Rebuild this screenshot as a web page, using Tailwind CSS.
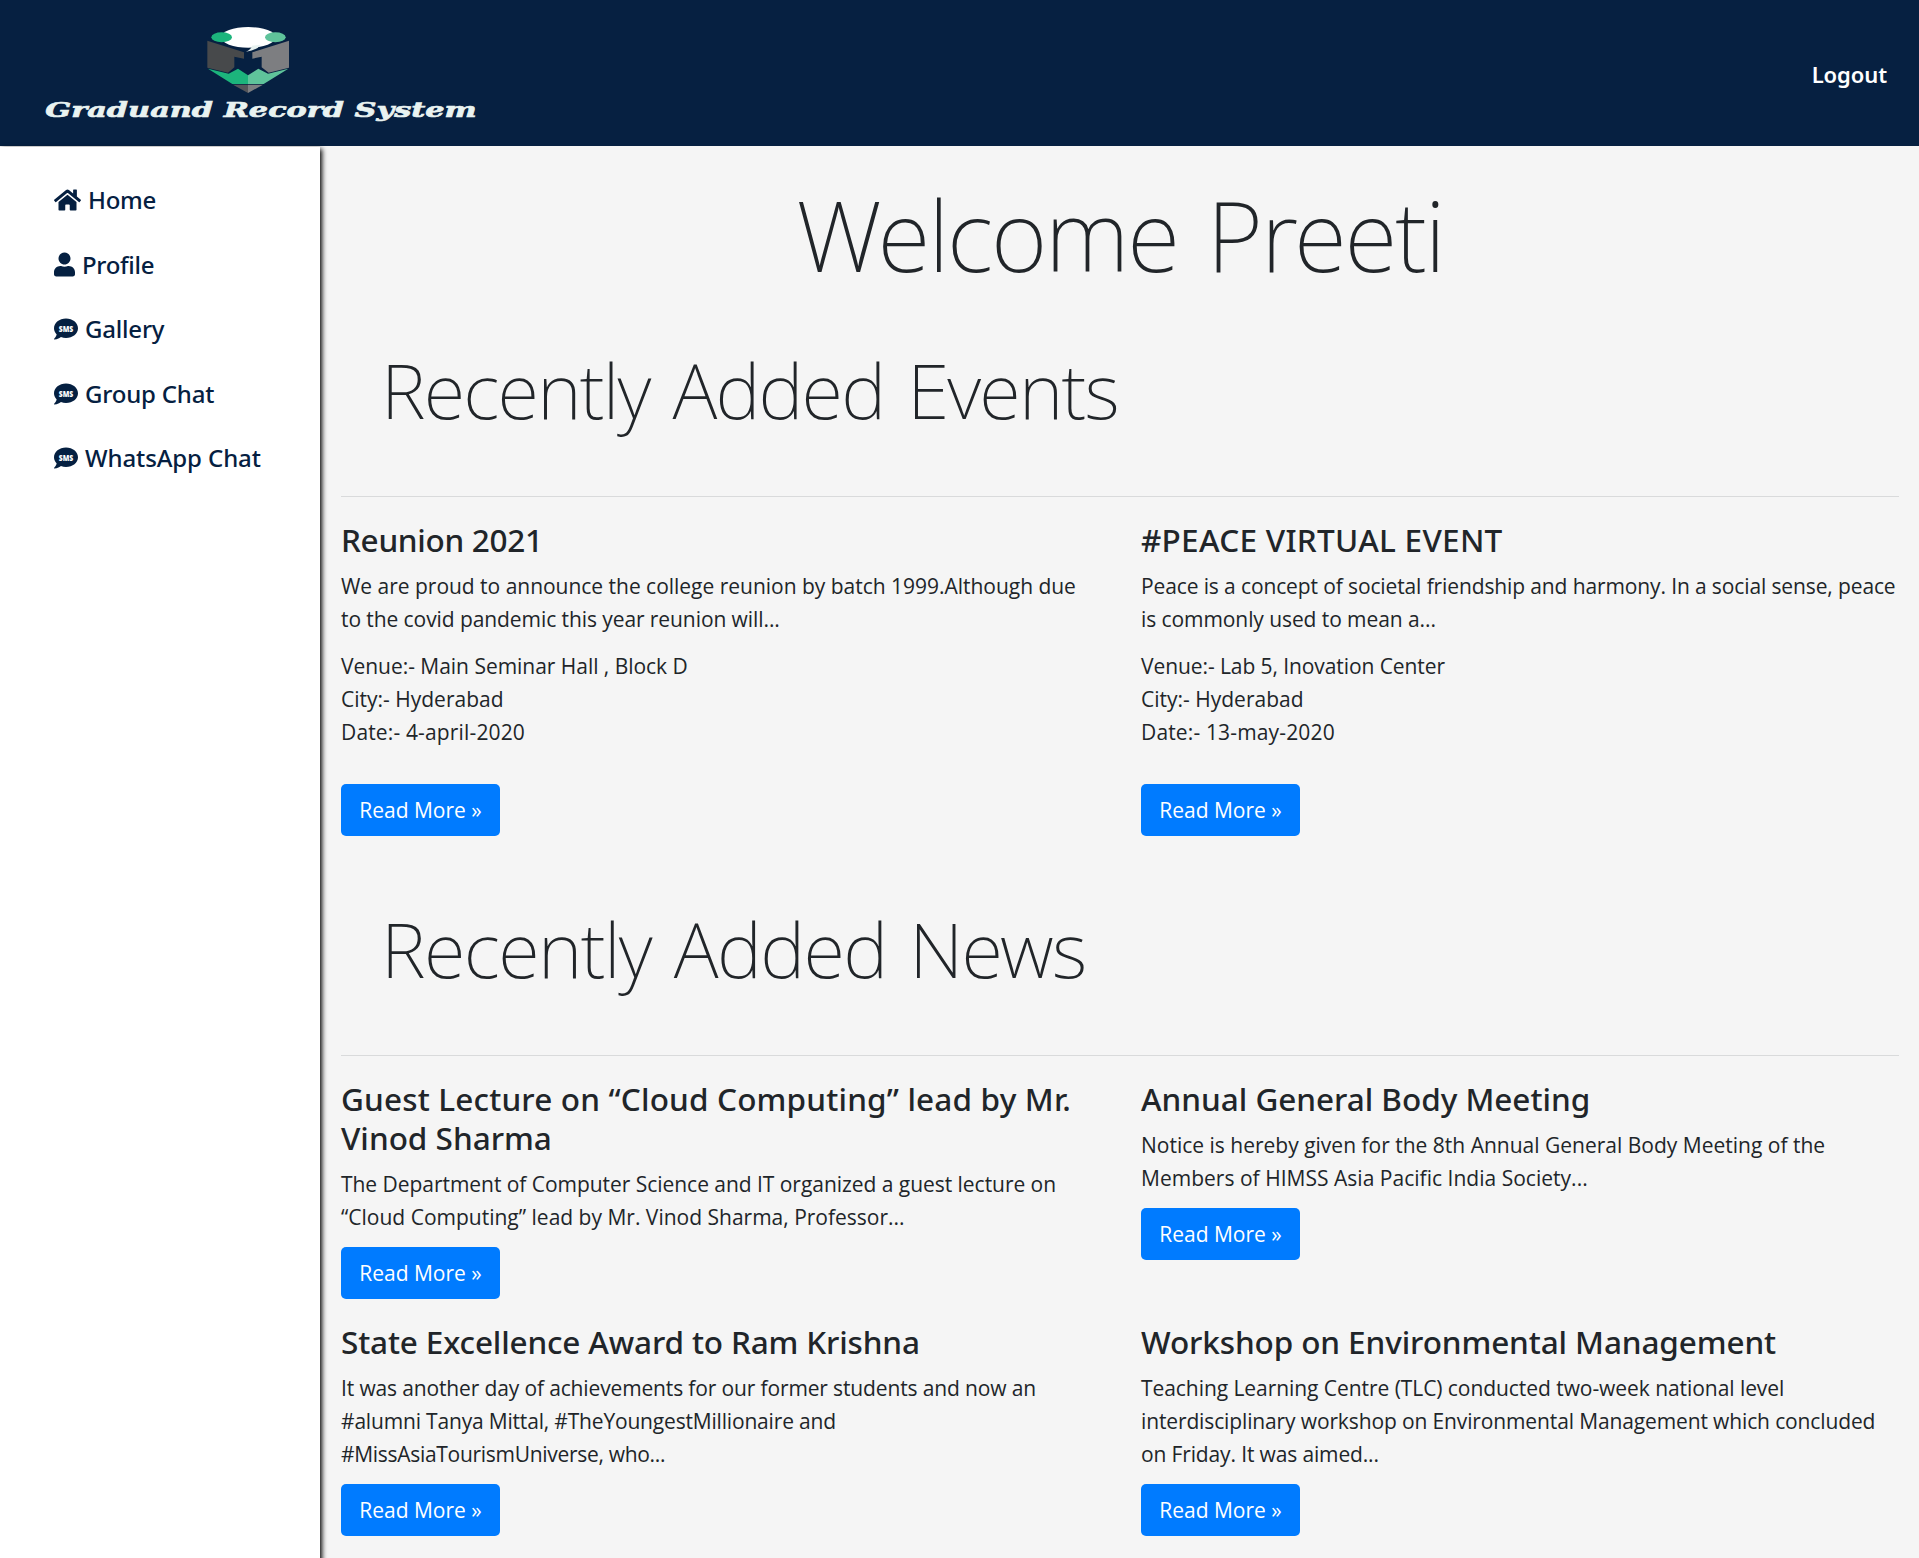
<!DOCTYPE html>
<html lang="en">
<head>
<meta charset="utf-8">
<title>Graduand Record System</title>
<script src="https://cdn.jsdelivr.net/npm/@tailwindcss/browser@4"></script>
</head>
<body class="bg-[#f5f5f5] text-[#212529] font-['Open_Sans',sans-serif] h-[1558px] overflow-hidden">
<svg class="hidden">
  <symbol id="sms" viewBox="0 0 512 512">
    <path d="M256 32C114.6 32 0 125.1 0 240c0 49.6 21.4 95 57 130.7C44.5 421.1 2.7 466 2.2 466.5c-2.2 2.3-2.8 5.7-1.5 8.7S4.8 480 8 480c66.3 0 116-31.8 140.6-51.4 32.7 12.3 69 19.4 107.4 19.4 141.4 0 256-93.1 256-208S397.4 32 256 32z" fill="#052041"/>
    <text x="102" y="310" font-family="Open Sans" font-weight="800" font-size="196" fill="#fff" textLength="308" lengthAdjust="spacingAndGlyphs">SMS</text>
  </symbol>
</svg>

<header class="h-[146px] bg-[#062041] flex items-center justify-between pr-8">
  <svg class="w-[500px] h-[146px]" viewBox="0 0 1500 438">
    <ellipse cx="745" cy="112" rx="82" ry="31" fill="#fff"/>
    <path d="M782 134Q772 150 738 155Q754 147 756 137Z" fill="#e8f2f0"/>
    <ellipse cx="665" cy="112" rx="31" ry="15" fill="#1cb47c"/>
    <ellipse cx="826" cy="112" rx="31" ry="15" fill="#5fc39b"/>
    <path d="M622 122L732 157V176L703 170V202L684 218L622 203Z" fill="#47494b"/>
    <path d="M867 122L757 157V176L785 170V202L806 218L867 203Z" fill="#7d7e81"/>
    <path d="M624 206L686 221L714 206L744 226V252H697Z" fill="#1cb47c"/>
    <path d="M865 206L804 221L775 206L744 226V252H791Z" fill="#5fc39b"/>
    <path d="M699 254H744V279Z" fill="#54555a"/>
    <path d="M789 254H744V279Z" fill="#7d7e81"/>
    <text x="136" y="350" font-family="DejaVu Serif" font-weight="700" font-style="italic" font-size="62" fill="#e9f3f1" stroke="#e9f3f1" stroke-width="2" textLength="1294" lengthAdjust="spacingAndGlyphs">Graduand Record System</text>
  </svg>
  <a class="text-[22px] font-semibold text-white font-['Noto_Sans',sans-serif] tracking-[-0.1px] leading-8 pt-0.5">Logout</a>
</header>

<div class="flex">
  <aside class="w-80 h-[1420px] mt-px shrink-0 bg-white pt-[20.5px] pl-[54px] shadow-[2px_2px_5px_#000] text-[#052041] text-[24px] font-medium font-['Noto_Sans',sans-serif]">
    <nav class="flex flex-col">
      <a class="h-[64.6px] flex items-center gap-[7px] tracking-[-0.3px]">
        <svg class="w-[27px] h-[24px]" viewBox="0 0 576 512" fill="currentColor"><path d="M280.37 148.26L96 300.11V464a16 16 0 0 0 16 16l112.06-.29a16 16 0 0 0 15.92-16V368a16 16 0 0 1 16-16h64a16 16 0 0 1 16 16v95.64a16 16 0 0 0 16 16.05L464 480a16 16 0 0 0 16-16V300L295.67 148.26a12.19 12.19 0 0 0-15.3 0zM571.6 251.47L488 182.56V44.05a12 12 0 0 0-12-12h-56a12 12 0 0 0-12 12v72.61L318.47 43a48 48 0 0 0-61 0L4.34 251.47a12 12 0 0 0-1.6 16.9l25.5 31A12 12 0 0 0 45.15 301l235.22-193.74a12.19 12.19 0 0 1 15.3 0L530.9 301a12 12 0 0 0 16.9-1.6l25.5-31a12 12 0 0 0-1.7-16.93z"/></svg>
        <span class="pt-px">Home</span></a>
      <a class="h-[64.6px] flex items-center gap-[7px] tracking-[-0.3px]">
        <svg class="w-[21px] h-[25px]" viewBox="0 0 448 512" fill="currentColor"><path d="M224 256c70.7 0 128-57.3 128-128S294.7 0 224 0 96 57.3 96 128s57.3 128 128 128zm89.6 32h-16.7c-22.2 10.2-46.9 16-72.9 16s-50.6-5.8-72.9-16h-16.7C60.2 288 0 348.2 0 422.4V464c0 26.5 21.5 48 48 48h352c26.5 0 48-21.5 48-48v-41.6c0-74.2-60.2-134.4-134.4-134.4z"/></svg>
        <span class="pt-px">Profile</span></a>
      <a class="h-[64.6px] flex items-center gap-[7px] tracking-[-0.2px]"><svg class="size-6"><use href="#sms"/></svg><span class="pt-px">Gallery</span></a>
      <a class="h-[64.6px] flex items-center gap-[7px] tracking-[-0.2px]"><svg class="size-6"><use href="#sms"/></svg><span class="pt-px">Group Chat</span></a>
      <a class="h-[64.6px] flex items-center gap-[7px] tracking-[-0.1px]"><svg class="size-6"><use href="#sms"/></svg>WhatsApp Chat</a>
    </nav>
  </aside>

  <main class="flex-1 pl-[21px] pr-5 pt-[30px] whitespace-nowrap">
    <h1 class="text-center text-[97px] leading-[116px] font-extralight font-['Noto_Sans',sans-serif] tracking-[-2.2px] [word-spacing:6px]">Welcome Preeti</h1>

    <h2 class="mt-[52px] pl-[40px] text-[76px] leading-[92px] font-extralight font-['Noto_Sans',sans-serif] tracking-[-1.8px] [word-spacing:5px]">Recently Added Events</h2>
    <hr class="mt-[60px] border-[#d9dadb]">
    <section class="mt-[23px] grid grid-cols-2 gap-x-[42px] text-[21px] leading-[33px]">
      <article>
        <h3 class="mb-[11px] text-[31.5px] leading-[39px] font-medium font-['Noto_Sans',sans-serif] tracking-[-0.3px]">Reunion 2021</h3>
        <p><span class="tracking-[-0.02px]">We are proud to announce the college reunion by batch 1999.Although due</span><br><span class="tracking-[-0.08px]">to the covid pandemic this year reunion will...</span></p>
        <p class="mt-3.5"><span class="tracking-[-0.03px]">Venue:- Main Seminar Hall , Block D</span><br>City:- Hyderabad<br><span class="tracking-[0.15px]">Date:- 4-april-2020</span></p>
        <a class="mt-[35px] pt-px flex w-[159px] h-[52px] items-center justify-center rounded-[5px] bg-[#007bff] text-white">Read More »</a>
      </article>
      <article>
        <h3 class="mb-[11px] text-[31.5px] leading-[39px] font-medium font-['Noto_Sans',sans-serif] tracking-[0.27px]">#PEACE VIRTUAL EVENT</h3>
        <p><span class="tracking-[-0.12px]">Peace is a concept of societal friendship and harmony. In a social sense, peace</span><br><span class="tracking-[-0.08px]">is commonly used to mean a...</span></p>
        <p class="mt-3.5"><span class="tracking-[-0.08px]">Venue:- Lab 5, Inovation Center</span><br>City:- Hyderabad<br><span class="tracking-[0.15px]">Date:- 13-may-2020</span></p>
        <a class="mt-[35px] pt-px flex w-[159px] h-[52px] items-center justify-center rounded-[5px] bg-[#007bff] text-white">Read More »</a>
      </article>
    </section>

    <h2 class="mt-[67px] pl-[40px] text-[76px] leading-[92px] font-extralight font-['Noto_Sans',sans-serif] tracking-[-1.6px] [word-spacing:4.5px]">Recently Added News</h2>
    <hr class="mt-[60px] border-[#d9dadb]">
    <section class="mt-[23px] grid grid-cols-2 gap-x-[42px] gap-y-[23px] text-[21px] leading-[33px]">
      <article>
        <h3 class="mb-[11px] text-[31.5px] leading-[39px] font-medium font-['Noto_Sans',sans-serif] tracking-[0.17px]">Guest Lecture on “Cloud Computing” lead by Mr.<br><span class="tracking-[0px]">Vinod Sharma</span></h3>
        <p><span class="tracking-[-0.04px]">The Department of Computer Science and IT organized a guest lecture on</span><br><span class="tracking-[0px]">“Cloud Computing” lead by Mr. Vinod Sharma, Professor...</span></p>
        <a class="mt-[13px] flex w-[159px] h-[52px] items-center justify-center rounded-[5px] bg-[#007bff] text-white">Read More »</a>
      </article>
      <article>
        <h3 class="mb-[11px] text-[31.5px] leading-[39px] font-medium font-['Noto_Sans',sans-serif] tracking-[-0.03px]">Annual General Body Meeting</h3>
        <p><span class="tracking-[0px]">Notice is hereby given for the 8th Annual General Body Meeting of the</span><br><span class="tracking-[0.02px]">Members of HIMSS Asia Pacific India Society...</span></p>
        <a class="mt-[13px] flex w-[159px] h-[52px] items-center justify-center rounded-[5px] bg-[#007bff] text-white">Read More »</a>
      </article>
      <article>
        <h3 class="mb-[11px] text-[31.5px] leading-[39px] font-medium font-['Noto_Sans',sans-serif] tracking-[-0.15px]">State Excellence Award to Ram Krishna</h3>
        <p><span class="tracking-[-0.14px]">It was another day of achievements for our former students and now an</span><br><span class="tracking-[-0.18px]">#alumni Tanya Mittal, #TheYoungestMillionaire and</span><br><span class="tracking-[-0.3px]">#MissAsiaTourismUniverse, who...</span></p>
        <a class="mt-[13px] flex w-[159px] h-[52px] items-center justify-center rounded-[5px] bg-[#007bff] text-white">Read More »</a>
      </article>
      <article>
        <h3 class="mb-[11px] text-[31.5px] leading-[39px] font-medium font-['Noto_Sans',sans-serif] tracking-[-0.11px]">Workshop on Environmental Management</h3>
        <p><span class="tracking-[-0.06px]">Teaching Learning Centre (TLC) conducted two-week national level</span><br><span class="tracking-[-0.13px]">interdisciplinary workshop on Environmental Management which concluded</span><br><span class="tracking-[-0.14px]">on Friday. It was aimed...</span></p>
        <a class="mt-[13px] flex w-[159px] h-[52px] items-center justify-center rounded-[5px] bg-[#007bff] text-white">Read More »</a>
      </article>
    </section>
  </main>
</div>
</body>
</html>
